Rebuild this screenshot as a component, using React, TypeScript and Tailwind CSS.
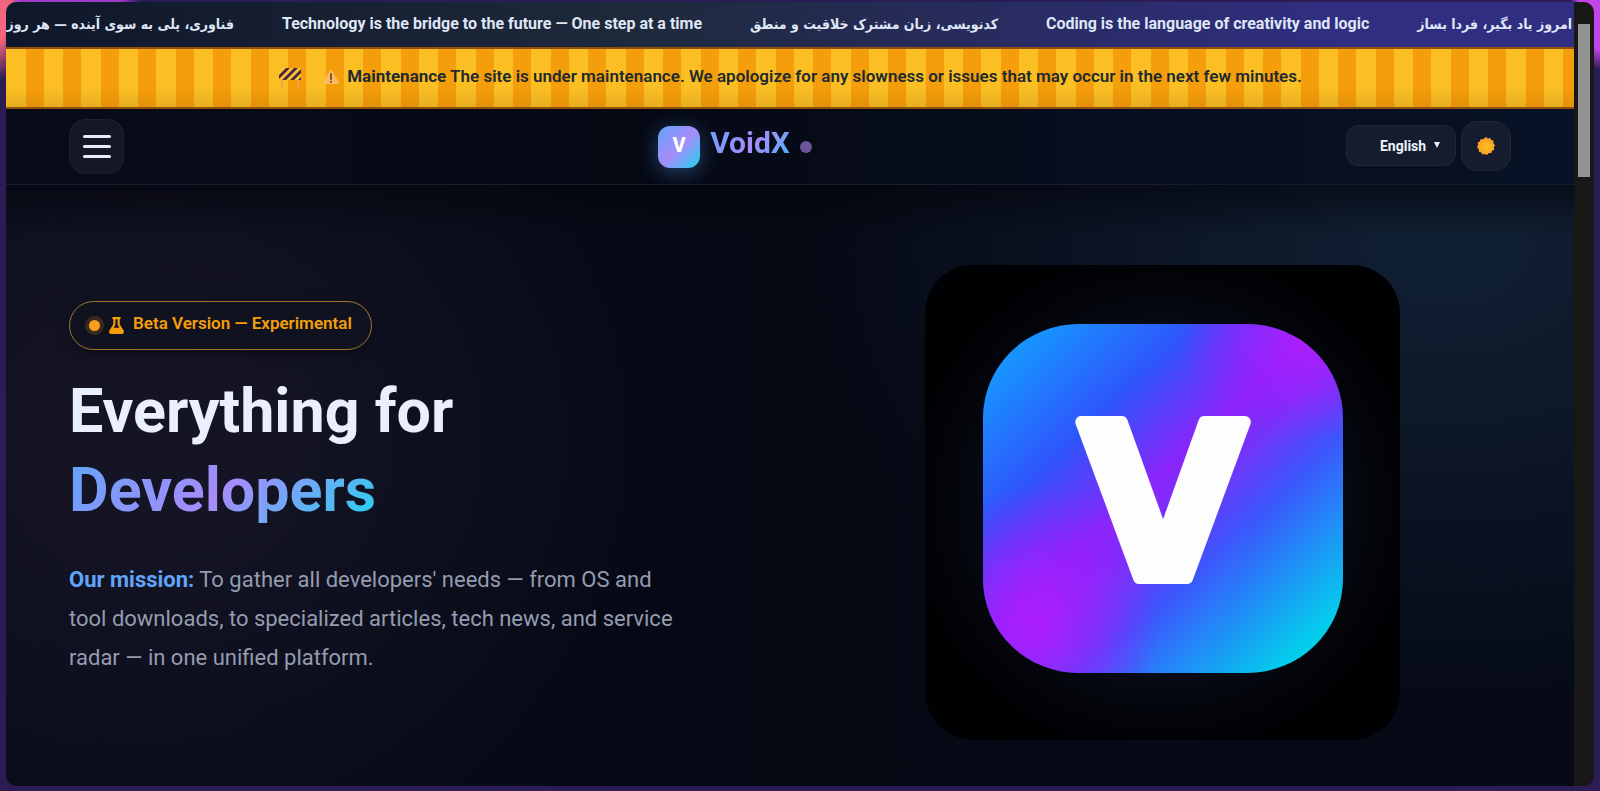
import { FaFlask } from "react-icons/fa";

const quotes = [
  { text: "فناوری، پلی به سوی آینده — هر روز یک قدم", rtl: true },
  { text: "Technology is the bridge to the future — One step at a time", rtl: false },
  { text: "کدنویسی، زبان مشترک خلاقیت و منطق", rtl: true },
  { text: "Coding is the language of creativity and logic", rtl: false },
  { text: "امروز یاد بگیر، فردا بساز", rtl: true },
];

function Ticker() {
  return (
    <div className="flex h-[45px] items-center justify-end gap-12 overflow-hidden whitespace-nowrap bg-[linear-gradient(90deg,#0f172a_0%,#1e293b_40%,#312e81_85%)] pr-[2px] pb-[2px] text-base font-bold text-[#dfe6f5]">
      {quotes.map((quote) => (
        <span
          key={quote.text}
          dir={quote.rtl ? "rtl" : "ltr"}
          className={quote.rtl ? "shrink-0 font-['DejaVu_Sans_Condensed','DejaVu_Sans',sans-serif] text-sm" : "shrink-0"}
        >
          {quote.text}
        </span>
      ))}
    </div>
  );
}

function Barricade() {
  return (
    <svg viewBox="0 0 24 22" className="h-[22px] w-6" aria-hidden="true">
      <path d="M4 12v8M20 12v8" stroke="#f0a54a" strokeWidth="2" strokeLinecap="round" />
      <rect x="1" y="1" width="22" height="12" rx="1" fill="#fbc531" />
      <path d="M1 8l7-7h4L1 12zM4 13L16 1h4L8 13zM12 13L23 2v4l-7 7zM20 13l3-3v3z" fill="#4a2440" />
    </svg>
  );
}

function Warning() {
  return (
    <svg viewBox="0 0 18 16" className="h-4 w-[18px]" aria-hidden="true">
      <path d="M9 2L16 14H2z" fill="#fdbb62" stroke="#fdbb62" strokeWidth="2" strokeLinejoin="round" />
      <path d="M9 5v5" stroke="#6b4a3a" strokeWidth="1.8" strokeLinecap="round" />
      <circle cx="9" cy="12.7" r="1" fill="#6b4a3a" />
    </svg>
  );
}

function MaintenanceBanner() {
  return (
    <div className="flex h-[62px] items-center justify-center border-y-2 border-[#92500f] bg-[linear-gradient(180deg,transparent_65%,rgba(120,70,0,0.14)),repeating-linear-gradient(90deg,#fbbf24_0px,#fbbf24_20px,#f59e0b_20px,#f59e0b_38px,#fbbf24_38px,#fbbf24_57px,#f59e0b_57px,#f59e0b_75px)] text-[17px] font-semibold text-[#1f2a2e]">
      <Barricade />
      <p className="ml-5 flex items-center gap-[7px] pb-[2px]">
        <Warning />
        <span>
          <strong className="font-bold">Maintenance</strong> The site is under maintenance. We apologize for any
          slowness or issues that may occur in the next few minutes.
        </span>
      </p>
    </div>
  );
}

function SunIcon() {
  return (
    <svg viewBox="0 0 20 20" className="size-5" aria-hidden="true">
      <defs>
        <radialGradient id="sun" cx="0.55" cy="0.55" r="0.55">
          <stop offset="0" stopColor="#f8c21c" />
          <stop offset="1" stopColor="#f79a2b" />
        </radialGradient>
      </defs>
      <path
        d="M10 1l1.900 1.500 2.300-.5 1 2.100 2.300.7-.1 2.400L19 9.200l-1.200 2.100.4 2.400-2.100 1.100-.8 2.200-2.400.1L11 18.900l-2.200-1-2.300.5-1.300-2-2.300-.7-.1-2.400L1 11.200 2 9l-.4-2.400 2.100-1.100.8-2.300 2.400 0z"
        fill="url(#sun)"
      />
    </svg>
  );
}

function Header() {
  return (
    <header className="flex items-center justify-between border-b border-[#171d30] bg-[linear-gradient(90deg,#080b1a,#060914_40%,#081226)] px-[63px] py-[10px]">
      <button
        type="button"
        aria-label="Menu"
        className="flex size-[55px] flex-col items-center justify-center gap-[7px] rounded-2xl border border-[#1c2132] bg-[#141826]"
      >
        <span className="h-[3px] w-7 rounded-full bg-[#e6eafa]" />
        <span className="h-[3px] w-7 rounded-full bg-[#e6eafa]" />
        <span className="h-[3px] w-7 rounded-full bg-[#e6eafa]" />
      </button>

      <a href="#home" className="flex items-center">
        <span className="flex size-[42px] items-center justify-center rounded-xl bg-[linear-gradient(135deg,#60a5fa,#a78bfa_50%,#22d3ee)] pb-1 text-xl font-extrabold text-white shadow-[0_4px_20px_rgba(80,160,250,0.4)]">
          V
        </span>
        <span className="ml-[10px] bg-[linear-gradient(135deg,#60a5fa,#a78bfa_50%,#38bdf8)] bg-clip-text pb-2 text-[30px] leading-9 font-bold text-transparent">
          VoidX
        </span>
        <span className="ml-[10px] size-3 rounded-full bg-[#685699]" />
      </a>

      <div className="flex items-center gap-[5px] pb-[2px]">
        <div className="relative">
          <select
            aria-label="Language"
            defaultValue="en"
            className="h-[41px] w-[110px] appearance-none rounded-xl border border-[#1e273b] bg-[#141c2e] pl-[33px] text-sm font-bold text-[#eef2fc]"
          >
            <option value="en">English</option>
            <option value="fa">فارسی</option>
          </select>
          <svg viewBox="0 0 6 6" className="pointer-events-none absolute top-[17px] right-4 size-[6px]" aria-hidden="true">
            <path d="M0 0h6L3 6z" fill="#eef2fc" />
          </svg>
        </div>
        <button
          type="button"
          aria-label="Toggle theme"
          className="flex size-[50px] items-center justify-center rounded-2xl border border-[#1e273b] bg-[#141c2e]"
        >
          <SunIcon />
        </button>
      </div>
    </header>
  );
}

function Hero() {
  return (
    <main className="grid grow grid-cols-2 items-center gap-12 bg-[linear-gradient(180deg,rgba(3,5,12,0.6),transparent_50px),radial-gradient(ellipse_500px_440px_at_10%_42%,#141424_20%,transparent),radial-gradient(ellipse_640px_460px_at_92%_10%,#101e31_10%,transparent),linear-gradient(90deg,#0a0b1a,#050914_50%,#060a17)] px-[63px] pt-20 pb-[46px]">
      <div className="pb-7">
        <div className="inline-flex h-[49px] items-center rounded-full border border-[#9c7a30] bg-[#10131f] pr-[19px] pl-[15px] text-[17px] font-semibold text-[#f59e0b] shadow-[0_4px_14px_rgba(0,0,0,0.35)]">
          <span className="flex size-[19px] items-center justify-center rounded-full bg-[#3a2a1c]">
            <span className="size-[11px] rounded-full bg-[#f99d1c]" />
          </span>
          <FaFlask className="ml-1 size-[17px]" />
          <span className="ml-2 pb-[2px]">Beta Version — Experimental</span>
        </div>
        <h1 className="mt-[22px] text-[61px] leading-[79px] font-bold text-[#eaf0fb]">
          Everything for
          <br />
          <span className="bg-[linear-gradient(135deg,#60a5fa,#a78bfa_50%,#22d3ee)] bg-clip-text text-transparent">
            Developers
          </span>
        </h1>
        <p className="mt-[30px] max-w-[620px] text-[22px] leading-[39px] text-[#949cb0]">
          <strong className="font-bold text-[#60a5fa]">Our mission:</strong> To gather all developers' needs — from OS
          and tool downloads, to specialized articles, tech news, and service radar — in one unified platform.
        </p>
      </div>

      <div className="flex justify-center">
        <div className="flex size-[475px] items-center justify-center rounded-[48px] bg-[radial-gradient(circle,#0a1024_40%,#05070f_58%,#000103_75%)] pb-2">
          <svg viewBox="0 0 360 349" className="h-[349px] w-[360px]" role="img" aria-label="VoidX logo">
            <defs>
              <linearGradient id="tile" gradientUnits="userSpaceOnUse" x1="30" y1="20" x2="325" y2="330">
                <stop offset="0" stopColor="#1599ff" />
                <stop offset="0.26" stopColor="#2f55fb" />
                <stop offset="0.46" stopColor="#8a25fb" />
                <stop offset="0.54" stopColor="#7a30fa" />
                <stop offset="0.68" stopColor="#3d55fb" />
                <stop offset="0.8" stopColor="#2485f8" />
                <stop offset="0.98" stopColor="#04cdeb" />
              </linearGradient>
              <radialGradient id="glow">
                <stop offset="0" stopColor="#b81cfc" stopOpacity="0.8" />
                <stop offset="0.5" stopColor="#a81cfc" stopOpacity="0.5" />
                <stop offset="1" stopColor="#a01cfc" stopOpacity="0" />
              </radialGradient>
              <clipPath id="tileShape">
                <rect width="360" height="349" rx="96" ry="94" />
              </clipPath>
            </defs>
            <g clipPath="url(#tileShape)">
              <rect width="360" height="349" fill="url(#tile)" />
              <ellipse cx="325" cy="15" rx="130" ry="100" fill="url(#glow)" />
              <ellipse cx="55" cy="300" rx="120" ry="140" fill="url(#glow)" />
            </g>
            <text
              x="180"
              y="254"
              textAnchor="middle"
              fill="#fdfdfd"
              stroke="#fdfdfd"
              strokeWidth="12"
              strokeLinejoin="round"
              className="font-['DejaVu_Sans',sans-serif] text-[214px] font-bold"
            >
              V
            </text>
          </svg>
        </div>
      </div>
    </main>
  );
}

export default function App() {
  return (
    <div className="flex min-h-screen flex-col bg-[#2c1c55] bg-[radial-gradient(ellipse_20px_80px_at_0%_0%,#f4657f_50%,transparent),radial-gradient(ellipse_30px_70px_at_100%_0%,#c044e8_70%,transparent),linear-gradient(90deg,#a03ac8_0px,#a03ac8_120px,transparent_140px)] bg-[size:100%_100%,100%_100%,100%_4px] bg-no-repeat px-[6px] pt-[2px] pb-[5px] font-['Roboto','Noto_Sans',sans-serif]">
      <div className="flex grow overflow-hidden rounded-[10px]">
        <div className="flex min-w-0 grow flex-col">
          <Ticker />
          <MaintenanceBanner />
          <Header />
          <Hero />
        </div>
        {/* scrollbar track */}
        <div className="w-5 shrink-0 bg-[#171816] px-1 pt-[22px]">
          <div className="h-[153px] w-3 bg-[#939393]" />
        </div>
      </div>
    </div>
  );
}
